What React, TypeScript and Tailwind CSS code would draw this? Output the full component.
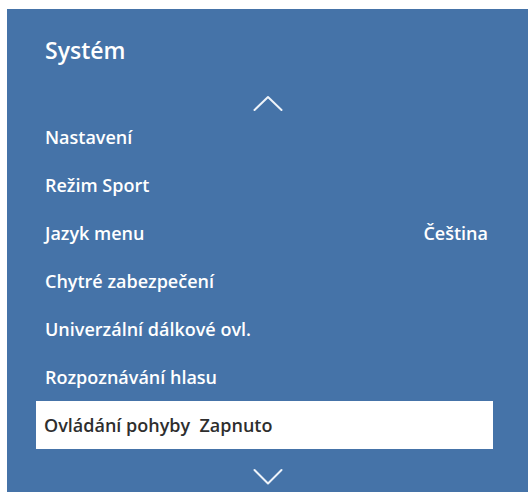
import React from "react";

const items = [
  { label: "Nastavení" },
  { label: "Režim Sport" },
  { label: "Jazyk menu", value: "Čeština" },
  { label: "Chytré zabezpečení" },
  { label: "Univerzální dálkové ovl." },
  { label: "Rozpoznávání hlasu" },
  { label: "Ovládání pohyby  Zapnuto", selected: true },
];

export default function App() {
  return (
    <div className="w-[532px] h-[496px] bg-white pt-[9px] pl-[7px]" style={{ fontFamily: '"Open Sans", "Noto Sans", sans-serif' }}>
      <div className="w-[521px] h-[483px] bg-[#4573a8] flex flex-col pt-[26px]">
        <div className="pl-[38px] h-[30px] leading-[30px] text-[23px] font-semibold text-white">Systém</div>
        <div className="flex justify-center mt-[30px] h-[16px]">
          <svg width="30" height="16" viewBox="0 0 30 16" fill="none">
            <path d="M1.5 15 L15 2 L28.5 15" stroke="#eef3f9" strokeWidth="2" strokeLinecap="round" strokeLinejoin="round" />
          </svg>
        </div>
        <div className="flex flex-col ml-[29px] mr-[35px] mt-[2px]">
          {items.map((it) => (
            <div
              key={it.label}
              className={
                it.selected
                  ? "h-[48px] flex items-center justify-between pl-[8px] pr-[5px] bg-white text-[#2e2e2e] text-[18px] font-semibold whitespace-pre"
                  : "h-[48px] flex items-center justify-between pl-[9px] pr-[5px] text-white text-[18px] font-semibold whitespace-pre"
              }
            >
              <span>{it.label}</span>
              {it.value ? <span>{it.value}</span> : null}
            </div>
          ))}
        </div>
        <div className="flex justify-center mt-[19px] h-[17px]">
          <svg width="30" height="17" viewBox="0 0 30 17" fill="none">
            <path d="M1.5 2 L15 15.5 L28.5 2" stroke="#eef3f9" strokeWidth="2" strokeLinecap="round" strokeLinejoin="round" />
          </svg>
        </div>
      </div>
    </div>
  );
}
